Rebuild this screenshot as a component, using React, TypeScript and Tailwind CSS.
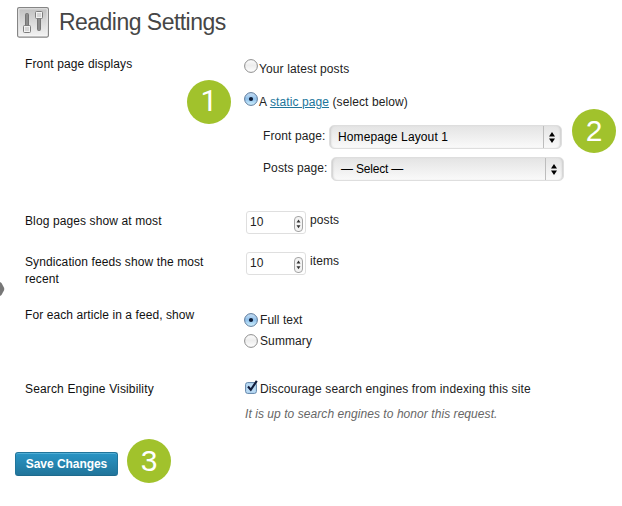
import type { ReactNode } from "react";

function Radio({ checked = false }: { checked?: boolean }) {
  return (
    <svg className="size-[14px] shrink-0" viewBox="0 0 14 14">
      <defs>
        <linearGradient id="radioOff" x1="0" y1="0" x2="0" y2="1">
          <stop offset="0" stopColor="#fdfdfd" />
          <stop offset=".45" stopColor="#ededed" />
          <stop offset="1" stopColor="#ffffff" />
        </linearGradient>
        <linearGradient id="radioOn" x1="0" y1="0" x2="0" y2="1">
          <stop offset="0" stopColor="#c9dff4" />
          <stop offset=".5" stopColor="#8fc0ea" />
          <stop offset="1" stopColor="#d3f3ff" />
        </linearGradient>
      </defs>
      <circle
        cx="7"
        cy="7"
        r="6.4"
        fill={checked ? "url(#radioOn)" : "url(#radioOff)"}
        stroke={checked ? "#5d7a9b" : "#8d8d8d"}
        strokeWidth="1"
      />
      {checked && <circle cx="7" cy="7" r="2.1" fill="#0c1a35" />}
    </svg>
  );
}

function Badge({ children, place }: { children: ReactNode; place: string }) {
  return (
    <div
      className={`absolute flex size-[44px] items-center justify-center rounded-full bg-[#a1c22c] text-[30px] leading-none text-white ${place}`}
    >
      {children}
    </div>
  );
}

function Select({ children, pad }: { children: ReactNode; pad: string }) {
  return (
    <div className="flex h-[24px] w-[233px] items-stretch rounded-[5px] border border-[#dedede] bg-linear-to-b from-[#e4e4e4] to-[#fafafa] shadow-[inset_2px_0_2px_-1px_#cccccc,inset_-2px_0_2px_-1px_#cccccc]">
      <span className={`grow whitespace-nowrap leading-[22px] text-black ${pad}`}>{children}</span>
      <span className="flex w-[18px] items-center justify-center border-l border-[#bdbdbd] pr-px">
        <svg className="h-[11px] w-[6px]" viewBox="0 0 6 11">
          <path d="M3 0L6 4.6H0zM3 11L0 6.4H6z" fill="#000" />
        </svg>
      </span>
    </div>
  );
}

function NumberField({ value }: { value: number }) {
  return (
    <div className="flex h-[23px] w-[60px] items-center justify-between rounded-[3px] border border-[#dfdfdf] pl-[3px] pr-[2px]">
      <span className="leading-[17px] tracking-[0.2px]">{value}</span>
      <svg className="mt-[2px] h-[16px] w-[9px]" viewBox="0 0 9 16">
        <rect x=".5" y=".5" width="8" height="15" rx="3.5" fill="#f3f3f3" stroke="#a5a5a5" />
        <path d="M4.5 3.5L6.5 6.5H2.5zM4.5 12.2L2.5 9.2H6.5z" fill="#333" />
      </svg>
    </div>
  );
}

function Row({ label, height, labelClass, children }: { label: ReactNode; height: string; labelClass: string; children: ReactNode }) {
  return (
    <div className={`flex shrink-0 pl-[25px] ${height}`}>
      <div className={`w-[219px] shrink-0 whitespace-nowrap pt-[8px] text-[#111] ${labelClass}`}>{label}</div>
      <div className="flex flex-col">{children}</div>
    </div>
  );
}

export default function App() {
  return (
    <main className="relative flex h-[506px] w-[622px] flex-col overflow-hidden bg-white font-['Liberation_Sans',Arial,sans-serif] text-[12px] leading-[17px] text-[#222]">
      <header className="flex h-[48px] shrink-0 items-start pl-[17px] pt-[7px]">
        <svg className="h-[31px] w-[32px]" viewBox="0 0 32 31">
          <defs>
            <linearGradient id="panel" x1="0" y1="0" x2="0" y2="1">
              <stop offset="0" stopColor="#c2c2c2" />
              <stop offset="1" stopColor="#f1f1f1" />
            </linearGradient>
          </defs>
          <rect x=".6" y=".6" width="30.8" height="29.5" rx="1.5" fill="#f6f6f6" stroke="#858585" strokeWidth="1.2" />
          <rect x="2.2" y="2.2" width="27.6" height="26" fill="url(#panel)" />
          <rect x="8.5" y="6.5" width="3" height="15" rx="1" fill="#8c8c8c" stroke="#757575" />
          <rect x="20.5" y="8" width="3" height="15.5" rx="1" fill="#8c8c8c" stroke="#757575" />
          <rect x="6.5" y="18.5" width="7" height="7" rx="1" fill="#f2f2f2" stroke="#7d7d7d" />
          <path d="M8 21h4M8 23h4" stroke="#aaa" strokeWidth=".8" />
          <rect x="18.5" y="4.5" width="7" height="7" rx="1" fill="#f2f2f2" stroke="#7d7d7d" />
          <path d="M20 7h4M20 9h4" stroke="#aaa" strokeWidth=".8" />
        </svg>
        <h1 className="ml-[10px] whitespace-nowrap text-[23px] leading-[30px] tracking-[-0.53px] text-[#464646]">Reading Settings</h1>
      </header>

      <Row label="Front page displays" height="h-[157px]" labelClass="tracking-[0.14px]">
        <div className="flex h-[33px] items-start pt-[11px]">
          <Radio />
          <span className="ml-[1px] mt-[2px] whitespace-nowrap tracking-[0.12px]">Your latest posts</span>
        </div>
        <div className="flex h-[44px] items-start pt-[11px]">
          <Radio checked />
          <span className="ml-[1px] mt-[2px] whitespace-nowrap tracking-[0.1px]">
            A <a className="text-[#21759b] underline">static page</a> (select below)
          </span>
        </div>
        <div className="flex h-[32px] items-start pl-[19px]">
          <span className="mt-[3px] w-[66px] whitespace-nowrap tracking-[0.1px]">Front page:</span>
          <Select pad="pl-[8px] tracking-[0.12px]">Homepage Layout 1</Select>
        </div>
        <div className="flex items-start pl-[19px]">
          <span className="mt-[3px] w-[68px] whitespace-nowrap tracking-[0.1px]">Posts page:</span>
          <Select pad="pl-[9px] tracking-[-0.2px]">— Select —</Select>
        </div>
      </Row>

      <Row label="Blog pages show at most" height="h-[41px]" labelClass="tracking-[0.11px]">
        <div className="flex items-start pl-[2px] pt-[6px]">
          <NumberField value={10} />
          <span className="ml-[4px] mt-px tracking-[0.1px]">posts</span>
        </div>
      </Row>
      <Row
        label={<>Syndication feeds show the most<br />recent</>}
        height="h-[53px]"
        labelClass="tracking-[0.1px]"
      >
        <div className="flex items-start pl-[2px] pt-[6px]">
          <NumberField value={10} />
          <span className="ml-[4px] mt-px tracking-[0.1px]">items</span>
        </div>
      </Row>
      <Row label="For each article in a feed, show" height="h-[74px]" labelClass="tracking-[0.08px]">
        <div className="flex h-[21px] items-start pt-[14px]">
          <Radio checked />
          <span className="ml-[2px] -mt-px whitespace-nowrap tracking-[0.05px]">Full text</span>
        </div>
        <div className="flex items-start pt-[14px]">
          <Radio />
          <span className="ml-[2px] -mt-px whitespace-nowrap tracking-[0.1px]">Summary</span>
        </div>
      </Row>
      <Row label="Search Engine Visibility" height="h-[72px]" labelClass="tracking-[0.15px]">
        <div className="flex h-[33px] items-start pl-px pt-[7px]">
          <svg className="h-[14px] w-[13px]" viewBox="0 0 13 14">
            <rect x=".6" y="2.6" width="10.8" height="10.8" rx="2" fill="#b9daf4" stroke="#6084a8" />
            <path d="M3 6.5L5.8 9.8L11.8 .8" fill="none" stroke="#101c3c" strokeWidth="2.1" />
          </svg>
          <span className="ml-[2px] mt-px whitespace-nowrap tracking-[0.12px]">Discourage search engines from indexing this site</span>
        </div>
        <p className="whitespace-nowrap pl-px italic tracking-[0.06px] text-[#666]">It is up to search engines to honor this request.</p>
      </Row>

      <div className="flex pl-[15px] pt-[7px]">
        <button className="h-[24px] w-[103px] whitespace-nowrap rounded-[3px] border border-[#21759b] border-b-[#1e6a8d] bg-linear-to-b from-[#2a95c5] to-[#21759b] text-[12px] font-bold leading-[20px] tracking-[-0.05px] text-white shadow-[inset_0_1px_0_rgba(120,200,230,0.5)]">
          Save Changes
        </button>
      </div>

      <Badge place="left-[187px] top-[80px] pb-[2px] font-['Roboto',sans-serif]">1</Badge>
      <Badge place="left-[572px] top-[109px] pb-px">2</Badge>
      <Badge place="left-[127px] top-[439px] pb-px">3</Badge>
      <svg className="absolute left-0 top-[281px] h-[16px] w-[5px]" viewBox="0 0 5 16">
        <path d="M0 1L1.5 2L4.2 7V9L1.5 14L0 15z" fill="#777" />
      </svg>
    </main>
  );
}
